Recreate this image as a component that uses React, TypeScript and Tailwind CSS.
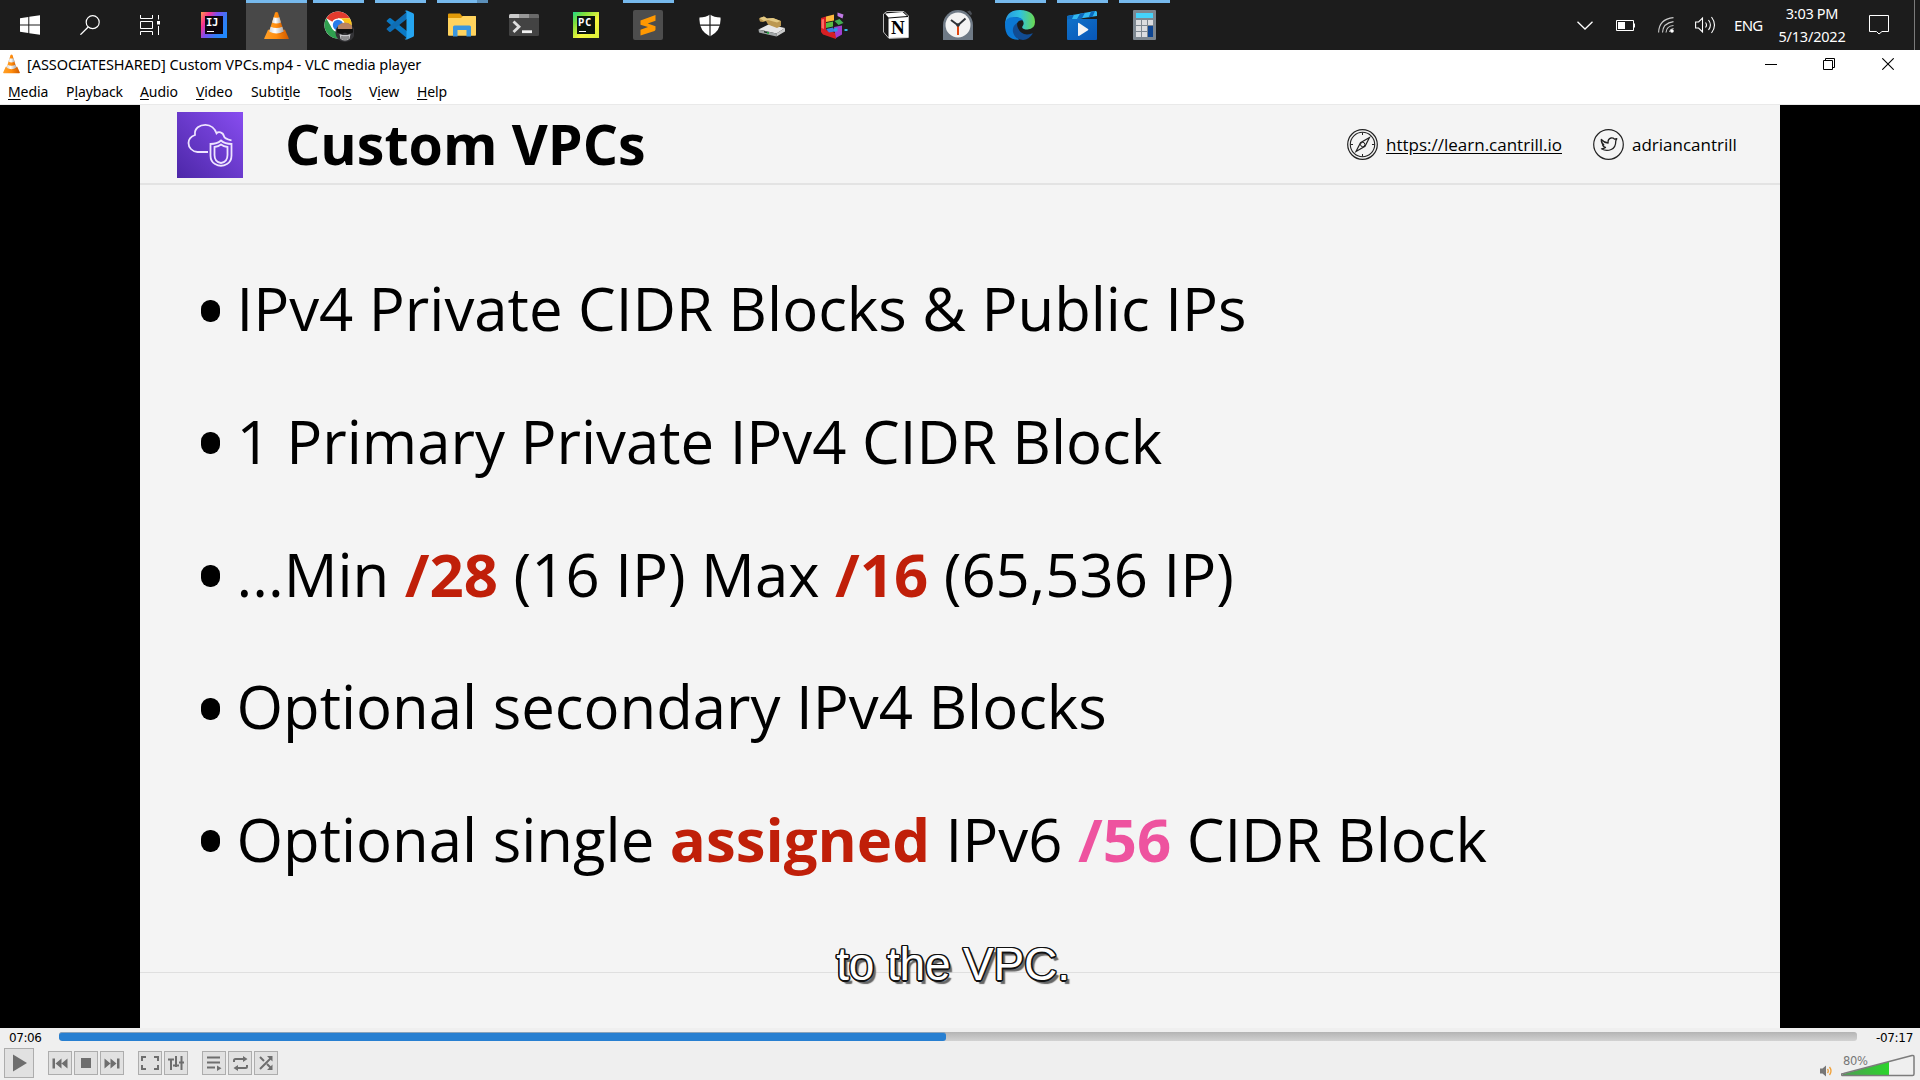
import type { ReactNode } from "react";

function Svg({ w, h, children, className = "" }: { w: number; h: number; children: ReactNode; className?: string }) {
  return (
    <svg width={w} height={h} viewBox={`0 0 ${w} ${h}`} fill="none" className={`block shrink-0 ${className}`}>
      {children}
    </svg>
  );
}

function Cone({ size }: { size: number }) {
  return (
    <svg width={size} height={(size * 30) / 26} viewBox="0 0 26 30" className="block shrink-0">
      <defs>
        <linearGradient id="coneOrange" x1="0" x2="1">
          <stop offset="0" stopColor="#ffa028" />
          <stop offset="0.5" stopColor="#ff8c0c" />
          <stop offset="1" stopColor="#cf5a00" />
        </linearGradient>
        <linearGradient id="coneWhite" x1="0" x2="1">
          <stop offset="0" stopColor="#d2d2d2" />
          <stop offset="0.4" stopColor="#ffffff" />
          <stop offset="1" stopColor="#a9a9a9" />
        </linearGradient>
      </defs>
      <path d="M4.2 19.5h17.6L25.6 28a.9.9 0 0 1-.8 1.3H1.2A.9.9 0 0 1 .4 28z" fill="url(#coneOrange)" />
      <path d="M11.5 1.5Q13 .4 14.5 1.5L20.8 22Q13 27.5 5.2 22z" fill="url(#coneOrange)" />
      <path d="M10 6.4q3 1.3 6 0l1.7 5.6q-4.7 2-9.4 0z" fill="url(#coneWhite)" />
      <path d="M6.9 16.4q6.1 2.8 12.2 0l1.5 4.8q-7.6 4.4-15.2 0z" fill="url(#coneWhite)" />
    </svg>
  );
}

function JetBrains({ label, pycharm = false }: { label: string; pycharm?: boolean }) {
  return (
    <span
      className={`relative block h-[26px] w-[26px] ${
        pycharm
          ? "bg-[linear-gradient(135deg,#21d789_0%,#7ee03c_25%,#f5f53c_60%,#d8ee3a_100%)]"
          : "bg-[linear-gradient(120deg,#fe9a4a_0%,#fc318c_22%,#7b4ff0_42%,#2f7df6_70%,#1a8cff_100%)]"
      }`}
    >
      <span className={`absolute inset-[4px] ${pycharm ? "bg-[#0b140c]" : "bg-[#0c0510]"}`}>
        <span className={`absolute top-[1px] left-[1px] font-['DejaVu_Sans_Mono',monospace] text-[10.5px] leading-[10px] font-bold text-white ${pycharm ? "tracking-[0.6px]" : "tracking-[-0.4px]"}`}>
          {label}
        </span>
        <span className="absolute bottom-[2px] left-[2px] h-px w-[7px] bg-white" />
      </span>
    </span>
  );
}

function Chrome() {
  return (
    <Svg w={30} h={32}>
      <circle cx="14" cy="14" r="13.6" fill="#fff" />
      <path d="M14 14 2.3 7.2A13.6 13.6 0 0 1 25.8 7.2H14z" fill="#e33b2e" />
      <path d="M2.3 7.2A13.6 13.6 0 0 0 14 27.6l5.9-10.2A6.8 6.8 0 0 1 8.1 17.4z" fill="#2fa04f" />
      <path d="M25.8 7.2H14a6.8 6.8 0 0 1 5.9 10.2L14 27.6A13.6 13.6 0 0 0 25.8 7.2z" fill="#fbc116" />
      <circle cx="14" cy="14" r="6.6" fill="#fff" />
      <circle cx="14" cy="14" r="5.2" fill="#2a7bea" />
      <circle cx="21" cy="21.5" r="9.6" fill="#333336" />
      <path d="M14 14.5q7-6 14 0v4H14z" fill="#b98363" />
      <path d="M13 18h16v3.5l-5 1.5-3-1.5-3 1.5-5-1.5z" fill="#111" />
      <path d="M15.5 23l3 1h5l3-1-1 5q-4.5 3-9 0z" fill="#c9c9cc" />
      <path d="M18 25v3.5M20 25.2v4M22 25.2v4M24 25v3.5" stroke="#333" strokeWidth=".8" />
    </Svg>
  );
}

function Code() {
  return (
    <Svg w={30} h={30}>
      <path d="M2 10.3 4.2 8.3q.8-.6 1.6 0L23 22v7L1.8 11.6q-.6-.7.2-1.3z" fill="#0a79c4" />
      <path d="M2 19.7 4.2 21.7q.8.6 1.6 0L23 8V1L1.8 18.4q-.6.7.2 1.3z" fill="#0f6db3" />
      <path d="m22 .5 6.2 2.8q.8.5.8 1.5v20.4q0 1-.8 1.5L22 29.5q-1.5.4-2.5-.8 2 .6 2-1.4V2.7q0-2-2-1.4Q20.5.1 22 .5z" fill="#25a5f0" />
    </Svg>
  );
}

function Explorer() {
  return (
    <Svg w={28} h={24}>
      <path d="M0 1.5q0-1 1-1h11l2 2.5H28v5H0z" fill="#e19a08" />
      <path d="M0 5h13l2-2h12q1 0 1 1v18q0 .8-.8.8H.8Q0 22.8 0 22z" fill="#ffd35e" />
      <path d="M5 23.500V14q0-1.500 1.500-1.500h15q1.500 0 1.500 1.500v9.500h-4.500V17h-9v6.500z" fill="#3a96de" />
    </Svg>
  );
}

function Terminal() {
  return (
    <Svg w={30} h={22}>
      <rect width="30" height="22" rx="1.5" fill="#434343" />
      <path d="M0 4V1.5Q0 0 1.500 0H10v4z" fill="#cacaca" />
      <path d="M10 0h10v4H10z" fill="#989898" />
      <path d="M20 0h8.500Q30 0 30 1.500V4H20z" fill="#6a6a6a" />
      <path d="m4.500 7.500 5.500 5.300-5.500 5.300" stroke="#dedede" strokeWidth="2.8" />
      <path d="M13 17.700h10" stroke="#f2f2f2" strokeWidth="2.8" />
    </Svg>
  );
}

function Sublime() {
  return (
    <Svg w={30} h={30}>
      <rect width="30" height="30" rx="2" fill="#4d4d4d" />
      <path d="M7.500 10.500 22.500 5v5.800l-7.800 2.700 7.800 2.700v3.300q0 1-1 1.400L7.500 25.500v-5.700l7.500-2.700-7.500-2.400z" fill="#ff9800" />
    </Svg>
  );
}

function Shield() {
  return (
    <Svg w={22} h={23}>
      <path d="M11 .5Q15 3.500 21.500 3.500 22.500 17 11 22.500-.5 17 .5 3.500 7 3.500 11 .5z" fill="#fff" />
      <path d="M11 0v23M0 11.200h22" stroke="#1c1c1c" strokeWidth="1.2" />
    </Svg>
  );
}

function Drive() {
  return (
    <Svg w={30} h={22}>
      <path d="m1.500 14.500 10-5 16.500 3.500-8.500 5.500z" fill="#e7e7e7" />
      <path d="m1.500 14.500 18 4v3L2 17.500z" fill="#a2a7a8" />
      <path d="m19.500 18.500 8.500-5.500v3.500l-8.500 5z" fill="#c9caca" />
      <path d="m7 16 5 1.200v1.600l-5-1.200z" fill="#1f3527" />
      <circle cx="11" cy="18" r=".9" fill="#29ce51" />
      <path d="m2 3.500 5-2 3 2 6-.5 8 3v5l-4 2-9-3.500-2-3.500-3 1-3-.5z" fill="#bc9850" />
      <path d="m2.500 3 4.500-1.500 3 2 6-.5 7.500 3-3.500 1.500-9-2.500-4 1z" fill="#e2c883" />
    </Svg>
  );
}

function Blocks() {
  return (
    <Svg w={28} h={28}>
      <path d="m1 6 5-1.500V18l10 3v6L3 22.500 1 20z" fill="#d61f24" />
      <path d="m6 4.500 8-2v6L6 10z" fill="#ffb83c" />
      <path d="m6 11 7-1.500v5L6 16z" fill="#59bd44" />
      <path d="m6 17 7-1.500 2 4-6 1z" fill="#3e7fe0" />
      <path d="m14.500 9 5-2 4 4-5 2z" fill="#41b052" />
      <path d="m17.500.5 6 2-1 4-5-2.500z" fill="#bf79e4" />
      <path d="m14 15 8-1.500v9L16 26z" fill="#a03fd2" />
      <path d="m14 16.500 3.500-1v4H14z" fill="#2d9ce8" />
      <path d="M1.500 7.500 4 7v10l-2.500-1z" fill="#ff6c62" />
      <path d="M24.500 17h3v2h-3z" fill="#38b6e6" />
    </Svg>
  );
}

function Notion() {
  return (
    <span className="relative block h-[30px] w-[28px]">
      <Svg w={28} h={30}>
        <path d="M1.500 4 5 1.500h17L26.500 6v21.500L7 28.500 1.500 22z" fill="#111" stroke="#b8b8b8" strokeWidth="1" />
        <path d="M3 3.500 20.500 2l4.500 4L6.500 7.500z" fill="#fff" />
        <path d="M6.500 8.500 26 7v20.500L6.500 28z" fill="#fff" />
        <path d="m2 5.500 3.500 3v17L2 21z" fill="#191919" />
      </Svg>
      <span className="absolute top-[8px] left-[9px] font-['Liberation_Serif',serif] text-[19px] leading-[20px] font-bold text-black">N</span>
    </span>
  );
}

function Clock() {
  return (
    <Svg w={30} h={30}>
      <path d="M0 15A15 15 0 0 1 15 0a15 15 0 0 1 15 15v15H0z" fill="#6f7a86" />
      <path d="m24 1.500 3-1 2 3-1 2z" fill="#4a4e55" />
      <circle cx="15" cy="15" r="12.5" fill="#f3f3f3" />
      <path d="m8 10 7 5.300L22.500 8.500" stroke="#2f3338" strokeWidth="2" />
      <path d="M15 15.500V25" stroke="#e2450f" strokeWidth="2" />
      <circle cx="15" cy="15" r="1.8" fill="#2f3338" />
    </Svg>
  );
}

function Edge() {
  return (
    <Svg w={30} h={30}>
      <defs>
        <linearGradient id="edgeTop" x1="0" x2="1">
          <stop offset="0" stopColor="#2596e2" />
          <stop offset="0.5" stopColor="#2fc2df" />
          <stop offset="1" stopColor="#6bd94f" />
        </linearGradient>
      </defs>
      <path d="M.2 14Q.500 0 15 0q15 .5 15 12 0 7-7.500 7.500-4.500 0-5.300-2-.2-.8.800-2 1.500-2.500-.5-5.500Q9 3 .2 14z" fill="url(#edgeTop)" />
      <path d="M0 15q0-8 9-8 7 0 9 3.500-4-1-6 3Q8 22 14 29.800 0 30 0 15z" fill="#0b78d4" />
      <path d="M12 13q-5 3-4 9 2 8 10 8 6-.5 9.500-6 .5-1.200-.7-.6-6 2.600-10.500-.9-4.300-3.500-4.300-9.500z" fill="#114c93" />
    </Svg>
  );
}

function Movies() {
  return (
    <Svg w={30} h={29}>
      <defs>
        <linearGradient id="movieBody" x1="0" y1="0" x2="1" y2="1">
          <stop offset="0" stopColor="#0f72c9" />
          <stop offset="1" stopColor="#0856b8" />
        </linearGradient>
      </defs>
      <path d="M0 5 28 0q2-.2 2 1.500V5L10 8 0 13z" fill="#32b9f2" />
      <path d="m0 5 7-1.200L4.500 9 0 12zM13 2.700l5-.9-3 5.500-5 .8zM24 .7l4-.7-2.500 5.700-4 .7z" fill="#0b68bd" />
      <path d="M0 10q0-2 2-2h28v20q0 1-1 1H1q-1 0-1-1z" fill="url(#movieBody)" />
      <path d="M11 12.500q0-1 1-.5l9 6q.8.600 0 1.200l-9 5.700q-1 .4-1-.6z" fill="#f4f4f4" />
    </Svg>
  );
}

function Calculator() {
  const cells: [number, number][] = [[3, 10], [9, 10], [15, 10], [3, 16], [9, 16], [3, 22], [9, 22]];
  return (
    <Svg w={23} h={30}>
      <rect width="23" height="30" rx="1" fill="#7d8790" />
      <rect x="3" y="3" width="17" height="5" fill="#45d3fb" />
      {cells.map(([x, y]) => (
        <rect key={`${x}-${y}`} x={x} y={y} width="5" height="5" fill="#dbdde0" />
      ))}
      <rect x="15" y="16" width="5" height="11" fill="#0d4592" />
    </Svg>
  );
}

type TaskbarApp = { icon: ReactNode; state?: "active" | "open" | "multi"; nudge?: string };

const apps: TaskbarApp[] = [
  { icon: <JetBrains label="IJ" /> },
  { icon: <Cone size={25} />, state: "active" },
  { icon: <Chrome />, state: "open", nudge: "pt-[3px] pl-[1px]" },
  { icon: <Code />, state: "open" },
  { icon: <Explorer />, state: "multi" },
  { icon: <Terminal /> },
  { icon: <JetBrains label="PC" pycharm /> },
  { icon: <Sublime />, state: "open" },
  { icon: <Shield /> },
  { icon: <Drive />, nudge: "pt-[2px]" },
  { icon: <Blocks />, nudge: "pt-[2px]" },
  { icon: <Notion /> },
  { icon: <Clock /> },
  { icon: <Edge />, state: "open" },
  { icon: <Movies />, state: "open", nudge: "pt-[1px]" },
  { icon: <Calculator />, state: "open" },
];

function Taskbar() {
  return (
    <header className="flex h-[50px] shrink-0 bg-[#1c1c1c] text-white">
      <div className="flex w-[60px] items-center justify-center">
        <Svg w={20} h={20}>
          <path d="M0 3.200 8.300 2v7.500H0zM9.300 1.800 20 .2v9.300H9.300zM0 10.500h8.300V18L0 16.800zM9.300 10.500H20v9.300L9.300 18.200z" fill="#fff" />
        </Svg>
      </div>
      <div className="flex w-[60px] items-center justify-center">
        <Svg w={20} h={20}>
          <circle cx="12.7" cy="7.2" r="6.5" stroke="#fff" strokeWidth="1.2" />
          <path d="M8.200 12 .4 19.700" stroke="#fff" strokeWidth="1.3" />
        </Svg>
      </div>
      <div className="flex w-[64px] items-center justify-center pr-[4px]">
        <Svg w={20} h={20}>
          <path d="M.5 0v3.500h12V0M.5 20v-3.500h12V20M.5 6.500h12v7H.5zM18.500 0v4.500M18.500 11v9" stroke="#fff" />
          <path d="M17 6h3v3.500h-3z" fill="#fff" />
        </Svg>
      </div>
      {apps.map((app, i) => (
        <div key={i} className="relative flex w-[62px] shrink-0">
          <div className={`mr-px flex flex-1 items-center justify-center pr-px ${app.state === "active" ? "bg-[#484848]" : ""}`}>
            <span className={app.nudge}>{app.icon}</span>
          </div>
          {app.state === "active" && <span className="absolute top-0 left-0 h-[3px] w-[61px] bg-[#76b9ed]" />}
          {app.state === "open" && <span className="absolute top-0 left-[5px] h-[3px] w-[51px] bg-[#76b9ed]" />}
          {app.state === "multi" && (
            <span className="absolute top-0 left-[5px] flex h-[3px] w-[51px] bg-[#5b8fb9]">
              <span className="w-[40px] bg-[#76b9ed]" />
            </span>
          )}
        </div>
      ))}
      <div className="ml-auto flex items-center font-['Noto_Sans','Open_Sans',sans-serif]">
        <Svg w={16} h={9} className="mr-[23px]">
          <path d="m.5.7 7.500 7.300L15.500.7" stroke="#fff" strokeWidth="1.3" />
        </Svg>
        <Svg w={19} h={11} className="mr-[23px]">
          <path d="M.5.5h17v10H.5z" stroke="#fff" />
          <path d="M2 2h7v7H2zM18 3.500h1v4h-1z" fill="#fff" />
        </Svg>
        <Svg w={16} h={16} className="mr-[21px]">
          <path d="M.6 15.500Q1 2 15.500.6M4.500 15.500Q5 6 15.500 4.600M8 15.500Q8.500 9 15.500 8.500" stroke="#ccc" strokeWidth="1.1" />
          <path d="M11.500 15q0-3 4-3.500" stroke="#ccc" />
          <circle cx="14" cy="14" r="1.8" fill="#fff" />
        </Svg>
        <Svg w={21} h={18} className="mr-[18px]">
          <path d="M.6 6h3L7.500 2v14L3.600 12h-3z" stroke="#fff" strokeWidth="1.1" />
          <path d="M10.500 6.500q2 2.500 0 5M13.500 4q3.800 5 0 10M16.500 1q6 8 0 16" stroke="#fff" strokeWidth="1.1" />
        </Svg>
        <span className="w-[29px] text-[15px] leading-none tracking-[-0.7px]">ENG</span>
        <div className="ml-[5px] flex w-[82px] flex-col items-center pl-[6px] text-[14.5px] leading-[23px] whitespace-nowrap">
          <span className="-mt-px tracking-[-0.3px]">3:03 PM</span>
          <span className="tracking-[-0.2px]">5/13/2022</span>
        </div>
        <Svg w={20} h={20} className="mr-[25px] ml-[19px]">
          <path d="M.5.5h19v16h-6.500L10 19l-2.500-2.500H.5z" stroke="#fff" />
        </Svg>
        <span className="mr-[5px] h-full w-px bg-[#7a7a7a]" />
      </div>
    </header>
  );
}

const menus: { pre: string; key: string; post: string; width: string }[] = [
  { pre: "", key: "M", post: "edia", width: "w-[58px]" },
  { pre: "P", key: "l", post: "ayback", width: "w-[74px]" },
  { pre: "", key: "A", post: "udio", width: "w-[56px]" },
  { pre: "", key: "V", post: "ideo", width: "w-[55px]" },
  { pre: "Subti", key: "t", post: "le", width: "w-[67px]" },
  { pre: "Tool", key: "s", post: "", width: "w-[51px]" },
  { pre: "V", key: "i", post: "ew", width: "w-[48px]" },
  { pre: "", key: "H", post: "elp", width: "w-[60px]" },
];

function WindowChrome() {
  return (
    <div className="flex h-[55px] shrink-0 flex-col border-b border-[#e9e9e9] bg-white font-['Noto_Sans','Open_Sans',sans-serif] text-black">
      <div className="flex h-[28px] items-center">
        <div className="pl-[3px]">
          <Cone size={17} />
        </div>
        <span className="pl-[7px] text-[14.5px] leading-none tracking-[-0.08px]">[ASSOCIATESHARED] Custom VPCs.mp4 - VLC media player</span>
        <div className="ml-auto flex items-center pr-[26px]">
          <span className="mr-[46px] h-px w-[12px] bg-black" />
          <Svg w={12} h={12} className="mr-[47px]">
            <path d="M.5 2.500h9v9h-9zM2.500 2.500v-2h9v9h-2" stroke="#000" />
          </Svg>
          <Svg w={12} h={12}>
            <path d="m.3.3 11.400 11.400M11.700.3.3 11.700" stroke="#000" strokeWidth="1.1" />
          </Svg>
        </div>
      </div>
      <nav className="flex flex-1 items-center pt-[2px] pb-px pl-[8px] text-[14px] leading-none tracking-[-0.1px]">
        {menus.map((m) => (
          <span key={m.pre + m.key} className={m.width}>
            {m.pre}
            <span className="underline underline-offset-2">{m.key}</span>
            {m.post}
          </span>
        ))}
      </nav>
    </div>
  );
}

function VpcLogo() {
  return (
    <span className="mt-[2px] block h-[66px] w-[66px] bg-linear-to-tr from-[#4d27a8] to-[#884df0]">
      <Svg w={66} h={66}>
        <path
          d="M31 40H20.500C15 39.500 11.500 35.500 11.500 31c0-4 2.500-6.500 6.500-8C17 16 23 12.800 28.500 12.800c5.500 0 9.500 4 11 8.500 1.700-2 6.500-1.500 7.500 3 .5 2.500 3.500 3.200 7.500 4.200"
          stroke="#eee4ff"
          strokeWidth="1.8"
        />
        <path d="M44 28.500q4 3.500 10.500 3.500v11.500q0 6-4.500 8.500-6 3.500-12 0-4.500-2.500-4.500-8.500V32q6.500 0 10.500-3.500z" stroke="#eee4ff" strokeWidth="1.8" />
        <path d="M44 32.500q2.500 2 6.500 2.500v8q0 7-6.500 8-6.500-1-6.500-8v-8q4-.5 6.500-2.500z" stroke="#eee4ff" strokeWidth="1.8" />
      </Svg>
    </span>
  );
}

function Compass() {
  return (
    <Svg w={31} h={31}>
      <circle cx="15.5" cy="15.5" r="14.8" stroke="#222" strokeWidth="1.2" />
      <circle cx="15.5" cy="15.5" r="12.2" stroke="#222" strokeWidth="1.1" />
      <path d="M15.500 3.500v2.500M15.500 25v2.500M3.500 15.500H6M25 15.500h2.500" stroke="#222" />
      <path d="m22.500 8.500-4.500 8.800-9 5.200 4.500-8.800z" stroke="#222" strokeWidth="1.2" />
      <circle cx="15.7" cy="15.5" r="2.2" stroke="#222" />
    </Svg>
  );
}

function TwitterBadge() {
  return (
    <Svg w={31} h={31}>
      <circle cx="15.5" cy="15.5" r="14.8" stroke="#222" strokeWidth="1.2" />
      <path
        d="M8.300 10.500q3 3.300 6.800 3.500-.5-4.200 3-5 2-.3 3.500 1.200l2.200-.5-1 2q0 7-4.600 8.800-5 2.200-9.700-.7 2.500 0 4-1.300-2.500-.6-3-2.600h1.300q-2.600-1.500-2.500-5.400z"
        stroke="#222"
        strokeWidth="1.3"
        strokeLinejoin="round"
      />
    </Svg>
  );
}

const red = "font-bold text-[#c01f09]";

const bullets: ReactNode[] = [
  "IPv4 Private CIDR Blocks & Public IPs",
  "1 Primary Private IPv4 CIDR Block",
  <>
    ...Min <b className={red}>/28</b> (16 IP) Max <b className={red}>/16</b> (65,536 IP)
  </>,
  "Optional secondary IPv4 Blocks",
  <>
    Optional single <b className={red}>assigned</b> IPv6 <b className="font-bold text-[#ee539f]">/56</b> CIDR Block
  </>,
];

function Slide() {
  return (
    <main className="flex h-[923px] shrink-0 justify-center bg-black">
      <section className="relative flex w-[1640px] flex-col bg-[#f4f4f4] font-['Open_Sans','Noto_Sans',sans-serif] text-black">
        <div className="flex h-[80px] shrink-0 items-center border-b-2 border-[#e3e3e3] pr-[43px] pl-[37px]">
          <VpcLogo />
          <h1 className="pl-[42px] text-[55.5px] leading-none font-bold whitespace-nowrap">Custom VPCs</h1>
          <div className="ml-auto flex items-center text-[17px] leading-none">
            <Compass />
            <span className="ml-[8px] w-[177px] pt-px whitespace-nowrap underline underline-offset-2">https://learn.cantrill.io</span>
            <span className="ml-[30px]">
              <TwitterBadge />
            </span>
            <span className="ml-[8px] w-[105px] pt-px whitespace-nowrap">adriancantrill</span>
          </div>
        </div>
        <ul className="flex flex-col pt-[58px] pl-[61px]">
          {bullets.map((text, i) => (
            <li key={i} className="flex h-[132.6px] items-center text-[59.85px] leading-none whitespace-nowrap">
              <span className="mt-[3px] mr-[16.5px] h-[22px] w-[19px] rounded-[9px] bg-black" />
              <span>{text}</span>
            </li>
          ))}
        </ul>
        <div className="mt-auto h-[56px] border-t border-[#dfdfdf]" />
        <div className="absolute right-0 bottom-[37px] left-0 pr-[14px] text-center font-['Liberation_Sans',Arial,sans-serif] text-[46px] leading-[54px] tracking-[-0.15px] text-white [text-shadow:1.5px_0_0_#111,-1.5px_0_0_#111,0_1.5px_0_#111,0_-1.5px_0_#111,1.2px_1.2px_0_#111,-1.2px_1.2px_0_#111,1.2px_-1.2px_0_#111,-1.2px_-1.2px_0_#111,3.5px_3.5px_1px_#666]">
          to the VPC.
        </div>
      </section>
    </main>
  );
}

function Btn({ children, gap = "ml-[2px]" }: { children: ReactNode; gap?: string }) {
  return <button className={`flex h-[24px] w-[24px] items-center justify-center border border-[#adadad] bg-[#e1e1e1] ${gap}`}>{children}</button>;
}

const ink = "#6e6e6e";

function Controls() {
  return (
    <footer className="flex flex-1 flex-col bg-[#efefef]">
      <div className="flex h-[18px] items-start pt-[4px] font-['DejaVu_Sans',sans-serif] text-[12px] leading-none text-black">
        <span className="w-[50px] pl-[9px] tracking-[-0.4px]">07:06</span>
        <div className="ml-[9px] h-[9px] w-[1798px] overflow-hidden rounded-[3px] bg-linear-to-b from-[#b4b4b4] to-[#d2d2d2]">
          <div className="h-full w-[887px] rounded-[3px] border-t border-[#8aa3bb] bg-[#277fd1]" />
        </div>
        <span className="ml-auto pr-[7px] tracking-[-0.3px]">-07:17</span>
      </div>
      <div className="flex flex-1 items-start pt-[2px] pl-[4px]">
        <button className="flex h-[30px] w-[30px] items-center justify-center border border-[#adadad] bg-[#e1e1e1]">
          <Svg w={14} h={18} className="ml-px">
            <path d="m0 .5 14 8.500L0 17.500z" fill={ink} />
          </Svg>
        </button>
        <div className="flex pt-[3px]">
          <Btn gap="ml-[14px]">
            <Svg w={16} h={11}>
              <path d="M.5.5H3v10H.5zM9.500.5v10l-6-5zM15.500.5v10l-6-5z" fill={ink} />
            </Svg>
          </Btn>
          <Btn>
            <Svg w={10} h={10}>
              <path d="M0 0h10v10H0z" fill={ink} />
            </Svg>
          </Btn>
          <Btn>
            <Svg w={16} h={11}>
              <path d="M13 .5h2.500v10H13zM.5.5v10l6-5zM6.500.5v10l6-5z" fill={ink} />
            </Svg>
          </Btn>
          <Btn gap="ml-[14px]">
            <Svg w={18} h={14}>
              <path d="M1 5V1h4M13 1h4v4M17 9v4h-4M5 13H1V9" stroke={ink} strokeWidth="2" />
            </Svg>
          </Btn>
          <Btn>
            <Svg w={16} h={14}>
              <path d="M3 3v11M8 0v11M13.500 0v14" stroke={ink} strokeWidth="2" />
              <path d="M0 3.500h6M5 9.500h6M11 6.500h5" stroke={ink} strokeWidth="1.8" />
            </Svg>
          </Btn>
          <Btn gap="ml-[14px]">
            <Svg w={15} h={15} className="ml-px">
              <path d="M0 1.500h13M0 6.500h13M0 11.500h8" stroke={ink} strokeWidth="2" />
              <path d="m10 9.500 4.500 2.700L10 15z" fill={ink} />
            </Svg>
          </Btn>
          <Btn>
            <Svg w={15} h={15}>
              <path d="M1 6V4.500Q1 3 2.500 3H12M14 9v1.500q0 1.500-1.500 1.500H3" stroke={ink} strokeWidth="2" />
              <path d="m10 0 4.500 3L10 6zM5 9 .5 12 5 15z" fill={ink} />
            </Svg>
          </Btn>
          <Btn>
            <Svg w={14} h={14}>
              <path d="M1 13 11.500 2.500M1 1l4 4M8 8l4 4" stroke={ink} strokeWidth="2" />
              <path d="M8 0h5.500v5.500zM13.500 8.500V14H8z" fill={ink} />
            </Svg>
          </Btn>
        </div>
        <div className="ml-auto flex pr-[5px]">
          <Svg w={13} h={12} className="mt-[17px] mr-[8px]">
            <path d="M0 3.500h2.500L6 .5v11l-3.500-3H0z" fill="#777" />
            <path d="M7.500 4q1.500 2 0 4M9.500 2q3 4 0 8" stroke="#f0a037" strokeWidth="1.3" />
          </Svg>
          <div className="relative">
            <Svg w={74} h={24} className="mt-[6px]">
              <defs>
                <linearGradient id="volume" x1="0" x2="1">
                  <stop offset="0" stopColor="#4f9e55" />
                  <stop offset="1" stopColor="#2bd52b" />
                </linearGradient>
              </defs>
              <path d="M2 20 48 7.500V21H2z" fill="url(#volume)" />
              <path d="M2.500 19.500 71 1.500q2-.5 2 1.500v17q0 1.500-1.500 1.500h-69Q.5 21.500.5 20.500t2-1z" stroke="#7c7c7c" strokeWidth="1.5" />
            </Svg>
            <span className="absolute top-[8px] left-[2px] font-['DejaVu_Sans',sans-serif] text-[11.5px] leading-none tracking-[-0.3px] text-[#777]">80%</span>
          </div>
        </div>
      </div>
    </footer>
  );
}

export default function App() {
  return (
    <div className="flex h-[1080px] w-[1920px] flex-col overflow-hidden bg-white">
      <Taskbar />
      <WindowChrome />
      <Slide />
      <Controls />
    </div>
  );
}
